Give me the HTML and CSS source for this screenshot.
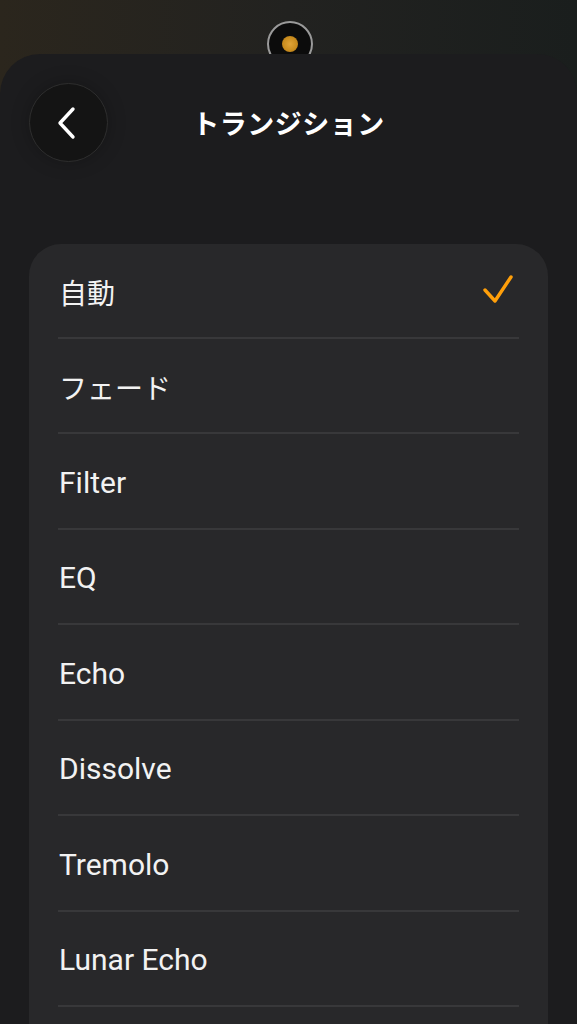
FILE: index.html
```html
<!DOCTYPE html>
<html lang="ja">
<head>
    <meta charset="UTF-8">
    <meta name="viewport" content="width=device-width, initial-scale=1.0">
    <title>トランジション</title>
    <link rel="stylesheet" href="styles.css">
</head>
<body>

    <!-- Backdrop with the now playing disc peeking out -->
    <div class="backdrop">
        <div class="disc"><span class="disc-dot"></span></div>
    </div>

    <div class="sheet">
        <header class="sheet-header">
            <button class="back-btn" aria-label="戻る">
                <svg width="24" height="34" viewBox="0 0 24 34">
                    <path d="M18 3 L5 17 L18 31" fill="none" stroke="#fff" stroke-width="3.4" stroke-linecap="round" stroke-linejoin="round"/>
                </svg>
            </button>
            <h1 class="sheet-title">トランジション</h1>
            <span></span>
        </header>

        <ul class="option-list">
            <li class="option option-jp">
                <span>自動</span>
                <svg class="check" width="32" height="30" viewBox="0 0 32 30">
                    <path d="M3 16 L13 27 L29 3" fill="none" stroke="#ff9f0a" stroke-width="3.4" stroke-linecap="round" stroke-linejoin="round"/>
                </svg>
            </li>
            <li class="option option-jp"><span>フェード</span></li>
            <li class="option"><span>Filter</span></li>
            <li class="option"><span>EQ</span></li>
            <li class="option"><span>Echo</span></li>
            <li class="option"><span>Dissolve</span></li>
            <li class="option"><span>Tremolo</span></li>
            <li class="option"><span>Lunar Echo</span></li>
        </ul>
    </div>

</body>
</html>
```

FILE: styles.css
```css
body {
    margin: 0;
    height: 1024px;
    overflow: hidden;
    font-family: Roboto, "Noto Sans CJK JP", sans-serif;
    background: linear-gradient(90deg, #2b261d 0%, #222220 50%, #1a1e1d 100%);
    color: #f2f2f2;
}

.backdrop {
    height: 54px;
    overflow: hidden;
    display: flex;
    justify-content: center;
}

.disc {
    width: 42px;
    height: 42px;
    margin-top: 21px;
    margin-left: 2px;
    border-radius: 50%;
    border: 2px solid #9a9a9a;
    background: #0c0c0c;
    display: flex;
    align-items: center;
    justify-content: center;
}

.disc-dot {
    width: 16px;
    height: 16px;
    border-radius: 50%;
    background: radial-gradient(circle, #e0a438 0%, #c98c1e 60%, #a56e12 100%);
}

.sheet {
    background: #1c1c1e;
    border-radius: 40px 40px 0 0;
    min-height: 970px;
    padding: 29px 29px 0;
}

.sheet-header {
    display: grid;
    grid-template-columns: 79px 1fr 79px;
    align-items: center;
    height: 79px;
}

.back-btn {
    width: 79px;
    height: 79px;
    border-radius: 50%;
    background: #141414;
    border: 1px solid #2e2e2e;
    display: flex;
    align-items: center;
    justify-content: center;
    padding: 0 4px 0 0;
    box-shadow: 0 0 18px rgba(0, 0, 0, 0.25);
}

.sheet-title {
    margin: 0;
    text-align: center;
    font-family: "Noto Sans CJK JP", sans-serif;
    font-size: 27px;
    font-weight: bold;
    letter-spacing: 0.5px;
    color: #fff;
}

.option-list {
    list-style: none;
    margin: 82px 0 0;
    padding: 0 29px;
    min-height: 820px;
    background: #28282a;
    border-radius: 32px 32px 0 0;
}

.option {
    box-sizing: border-box;
    height: 93.5px;
    padding: 3px 0 0 1px;
    border-bottom: 2px solid #38383a;
    display: flex;
    align-items: center;
    justify-content: space-between;
    font-size: 30px;
    box-sizing: content-box;
}

.option:first-child {
    height: 89.5px;
}

.option + .option {
    height: 90.5px;
}

.option-jp {
    font-size: 28px;
}

.check {
    margin-right: 5px;
    margin-top: -5px;
}
```
